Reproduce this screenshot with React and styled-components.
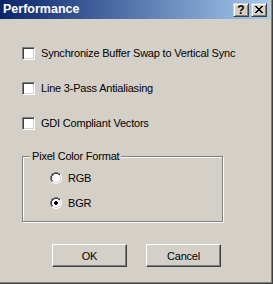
import React from "react";
import styled, { createGlobalStyle } from "styled-components";

const Global = createGlobalStyle`
  html, body { margin: 0; padding: 0; background: #d4d0c8; }
  body { font-family: "Liberation Sans", Arial, sans-serif; }
`;

const Window = styled.div`
  box-sizing: border-box;
  width: 273px;
  height: 284px;
  background: #d4d0c8;
  padding: 0 3px 2px 0;
  box-shadow: inset -1px -1px 0 #404040, inset -2px -2px 0 #808080;
  display: flex;
  flex-direction: column;
  font-family: "Liberation Sans", Arial, sans-serif;
  font-size: 11px;
  color: #000;
`;

const TitleBar = styled.div`
  height: 19px;
  flex: none;
  background: linear-gradient(to right, #0a246a, #a6caf0);
  display: flex;
  align-items: center;
  padding: 0 3px 0 3px;
`;

const Title = styled.div`
  flex: 1;
  color: #fff;
  font-weight: bold;
  font-size: 12.5px;
  line-height: 19px;
`;

const CaptionButton = styled.div`
  box-sizing: border-box;
  width: 16px;
  height: 14px;
  margin-left: ${(p) => (p.$gap ? "2px" : "0")};
  background: #d4d0c8;
  border: 1px solid;
  border-color: #d4d0c8 #404040 #404040 #d4d0c8;
  box-shadow: inset 1px 1px 0 #fff, inset -1px -1px 0 #808080;
  display: flex;
  align-items: center;
  justify-content: center;
  font-weight: bold;
  font-size: 12px;
  line-height: 12px;
  color: #000;
`;

const Content = styled.div`
  display: flex;
  flex-direction: column;
  padding: 28px 0 0 22px;
  letter-spacing: -0.2px;
`;

const CheckList = styled.div`
  display: flex;
  flex-direction: column;
  gap: 22px;
`;

const Row = styled.label`
  display: flex;
  align-items: center;
  height: 13px;
  line-height: 13px;
  gap: 6px;
  white-space: nowrap;
`;

const CheckBox = styled.span`
  box-sizing: border-box;
  width: 13px;
  height: 13px;
  flex: none;
  background: #fff;
  border: 1px solid;
  border-color: #808080 #fff #fff #808080;
  box-shadow: inset 1px 1px 0 #404040, inset -1px -1px 0 #d4d0c8;
`;

const GroupBox = styled.div`
  position: relative;
  box-sizing: border-box;
  margin-top: 26px;
  width: 201px;
  height: 66px;
  border: 1px solid #808080;
  box-shadow: 1px 1px 0 #fff, inset 1px 1px 0 #fff;
  padding: 15px 0 0 27px;
  display: flex;
  flex-direction: column;
  gap: 13px;
`;

const Legend = styled.span`
  position: absolute;
  left: 7px;
  top: -7px;
  padding: 0 2px;
  background: #d4d0c8;
  line-height: 13px;
  white-space: nowrap;
`;

const RadioRow = styled.label`
  display: flex;
  align-items: center;
  height: 12px;
  line-height: 12px;
  gap: 6px;
`;

const Radio = ({ checked }) => (
  <svg width="12" height="12" viewBox="0 0 12 12" shapeRendering="crispEdges">
    <g fill="#808080">
      <rect x="4" y="0" width="4" height="1" />
      <rect x="2" y="1" width="2" height="1" />
      <rect x="8" y="1" width="2" height="1" />
      <rect x="1" y="2" width="1" height="2" />
      <rect x="0" y="4" width="1" height="4" />
      <rect x="1" y="8" width="1" height="2" />
    </g>
    <g fill="#404040">
      <rect x="4" y="1" width="4" height="1" />
      <rect x="2" y="2" width="2" height="1" />
      <rect x="8" y="2" width="2" height="1" />
      <rect x="2" y="3" width="1" height="1" />
      <rect x="1" y="4" width="1" height="4" />
      <rect x="2" y="8" width="1" height="1" />
    </g>
    <g fill="#fff">
      <rect x="3" y="3" width="6" height="6" />
      <rect x="4" y="2" width="4" height="1" />
      <rect x="4" y="9" width="4" height="1" />
      <rect x="2" y="4" width="1" height="4" />
      <rect x="9" y="4" width="1" height="4" />
      <rect x="10" y="2" width="1" height="2" />
      <rect x="11" y="4" width="1" height="4" />
      <rect x="10" y="8" width="1" height="2" />
      <rect x="8" y="10" width="2" height="1" />
      <rect x="2" y="10" width="2" height="1" />
      <rect x="4" y="11" width="4" height="1" />
    </g>
    <g fill="#d4d0c8">
      <rect x="9" y="3" width="1" height="1" />
      <rect x="10" y="4" width="1" height="4" />
      <rect x="9" y="8" width="1" height="1" />
      <rect x="8" y="9" width="2" height="1" />
      <rect x="2" y="9" width="2" height="1" />
      <rect x="4" y="10" width="4" height="1" />
    </g>
    {checked && (
      <g fill="#000">
        <rect x="5" y="4" width="2" height="1" />
        <rect x="4" y="5" width="4" height="2" />
        <rect x="5" y="7" width="2" height="1" />
      </g>
    )}
  </svg>
);

const ButtonRow = styled.div`
  display: flex;
  gap: 19px;
  margin-top: 22px;
  margin-left: 30px;
`;

const Button = styled.div`
  box-sizing: border-box;
  width: 75px;
  height: 23px;
  background: #d4d0c8;
  border: 1px solid;
  border-color: #fff #404040 #404040 #fff;
  box-shadow: inset -1px -1px 0 #808080;
  display: flex;
  align-items: center;
  justify-content: center;
  font-size: 11px;
`;

const CloseIcon = () => (
  <svg width="8" height="7" viewBox="0 0 8 7" shapeRendering="crispEdges">
    <path
      fill="#000"
      d="M0 0h2v1h-2zM6 0h2v1h-2zM1 1h2v1h-2zM5 1h2v1h-2zM2 2h4v1h-4zM3 3h2v1h-2zM2 4h4v1h-4zM1 5h2v1h-2zM5 5h2v1h-2zM0 6h2v1h-2zM6 6h2v1h-2z"
    />
  </svg>
);

export default function App() {
  const checks = [
    "Synchronize Buffer Swap to Vertical Sync",
    "Line 3-Pass Antialiasing",
    "GDI Compliant Vectors",
  ];
  return (
    <>
      <Global />
      <Window>
        <TitleBar>
          <Title>Performance</Title>
          <CaptionButton>?</CaptionButton>
          <CaptionButton $gap>
            <CloseIcon />
          </CaptionButton>
        </TitleBar>
        <Content>
          <CheckList>
            {checks.map((c) => (
              <Row key={c}>
                <CheckBox />
                <span>{c}</span>
              </Row>
            ))}
          </CheckList>
          <GroupBox>
            <Legend>Pixel Color Format</Legend>
            <RadioRow>
              <Radio />
              <span>RGB</span>
            </RadioRow>
            <RadioRow>
              <Radio checked />
              <span>BGR</span>
            </RadioRow>
          </GroupBox>
          <ButtonRow>
            <Button>OK</Button>
            <Button>Cancel</Button>
          </ButtonRow>
        </Content>
      </Window>
    </>
  );
}
